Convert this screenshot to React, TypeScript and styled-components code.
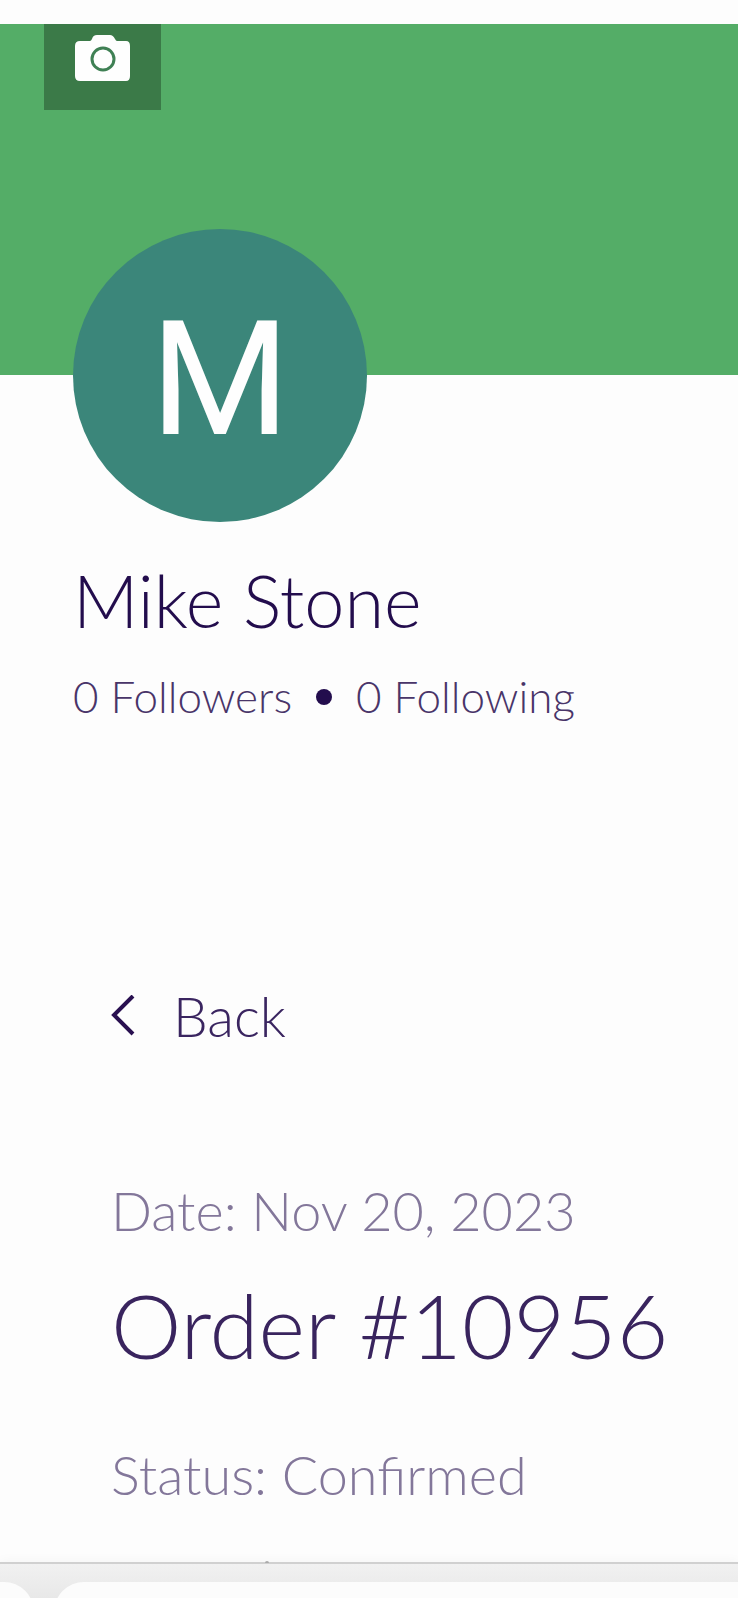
import React from "react";
import styled, { createGlobalStyle } from "styled-components";

const Global = createGlobalStyle`
  * { box-sizing: border-box; }
  body { margin: 0; background: #fdfdfd; color: #230d4d; font-family: Lato, "Open Sans", sans-serif; font-weight: 300; }
  h1, h2, p { margin: 0; font-weight: 300; }
`;
const Page = styled.div`
  display: flex; flex-direction: column; min-height: 100vh; padding-top: 24px;
`;
const Cover = styled.header`
  height: 351px; padding: 0 44px; background: #54ad67;
`;
const CameraButton = styled.button`
  display: flex; justify-content: center; align-items: flex-start;
  width: 117px; height: 86px; padding: 10px 0 0;
  border: 0; background: #3b7a48; color: #fefefe; cursor: pointer;
`;
const Profile = styled.section`padding: 0 73px;`;
const Avatar = styled.div`
  display: flex; align-items: center; justify-content: center;
  width: 294px; height: 293px; margin-top: -146px; padding-top: 8px; border-radius: 50%;
  background: #3b867a; color: #fefefe; font: 400 160px/1 Roboto, sans-serif;
`;
const Name = styled.h1`margin-top: 36px; font-size: 72px; line-height: 84px;`;
const Stats = styled.p`
  display: flex; align-items: center; margin-top: 26px; font-size: 44px; line-height: 56px;
`;
const Stat = styled.a`color: #493569; text-decoration: none;`;
const Dot = styled.span`width: 16px; height: 16px; margin: 2px 24px 0; border-radius: 50%; background: #230d4d;`;
const Order = styled.main`
  display: flex; flex-direction: column; align-items: flex-start;
  padding: 260px 24px 51px 111px;
`;
const Back = styled.button`
  display: flex; align-items: center; gap: 38px; margin-bottom: 131px; padding: 0; border: 0; background: none;
  color: #3a2560; font: inherit; font-size: 55px; line-height: 64px; cursor: pointer;
`;
const Meta = styled.p`color: #83779a; font-size: 54px; line-height: 64px;`;
const Title = styled.h2`margin: 30px 0 66px; color: #39245e; font-size: 89px; line-height: 104px;`;

const BottomBar = styled.footer`
  position: relative; display: flex; gap: 20px; height: 36px; margin-top: auto; padding-top: 18px;
  border-top: 2px solid #d0d0d0; background: linear-gradient(#f1f1f1, #e8e8e8);
  box-shadow: 0 -2px 10px rgba(0, 0, 0, 0.03);
`;
const TabClip = styled.div<{ $wide?: boolean }>`
  flex: ${(p) => (p.$wide ? "1" : "0 0 34px")}; height: 16px; overflow: hidden;
`;
const Tab = styled.div<{ $corners: string }>`
  height: 60px; border-radius: ${(p) => p.$corners}; background: #fcfcfc;
`;
const Speck = styled.span`
  position: absolute; top: -3px; left: 265px; width: 4px; height: 2px; border-radius: 2px 2px 0 0; background: #aaa;
`;

export default function App() {
  return (
    <Page>
      <Global />
      <Cover>
        <CameraButton aria-label="Change cover photo">
          <svg width="57" height="48" viewBox="0 0 57 48">
            <path
              fill="currentColor"
              d="M6 7h10q1 0 2-2 1-4 5-4h13q3 0 5 4 1 2 2 2h9q4 0 4 5v30q0 5-4 5H6q-5 0-5-5V12q0-5 5-5Z"
            />
            <circle cx="29" cy="25" r="11" fill="none" stroke="#3f8054" strokeWidth="3" />
          </svg>
        </CameraButton>
      </Cover>
      <Profile>
        <Avatar>M</Avatar>
        <Name>Mike Stone</Name>
        <Stats>
          <Stat href="#followers">0 Followers</Stat>
          <Dot />
          <Stat href="#following">0 Following</Stat>
        </Stats>
      </Profile>
      <Order>
        <Back>
          <svg width="24" height="42" viewBox="0 0 24 42" fill="none" stroke="#291050" strokeWidth="4">
            <path d="M22 1 3 20l19 19" />
          </svg>
          Back
        </Back>
        <Meta>Date: Nov 20, 2023</Meta>
        <Title>Order #10956</Title>
        <Meta>Status: Confirmed</Meta>
      </Order>
      <BottomBar>
        <Speck />
        <TabClip>
          <Tab $corners="0 30px 30px 0" />
        </TabClip>
        <TabClip $wide>
          <Tab $corners="30px 0 0 30px" />
        </TabClip>
      </BottomBar>
    </Page>
  );
}
